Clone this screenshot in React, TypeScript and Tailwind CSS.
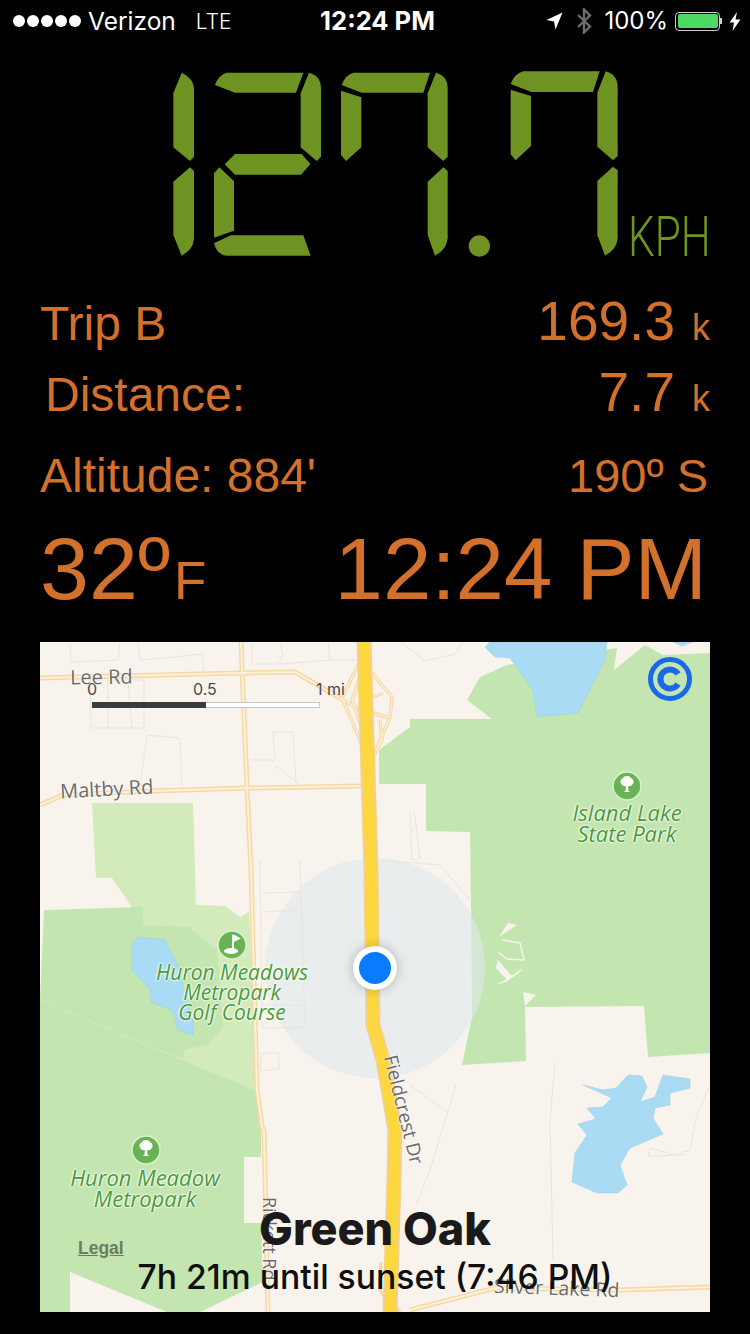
export default function App() {
  const lcd = "#6e9322";
  const road = "#f6d8a6";
  const roadIn = "#fdf1d8";
  const thin = "#e9e5dd";
  return (
    <div className="w-[750px] h-[1334px] bg-black overflow-hidden font-['Liberation_Sans',sans-serif] text-[#d2702c]">
      {/* status bar */}
      <div className="h-10 grid grid-cols-[1fr_auto_1fr] items-center text-white font-['Inter',sans-serif] text-[24.5px] leading-none pt-[2px]">
        <div className="flex items-center pl-[13px]">
          <div className="flex gap-[2px]">
            <span className="w-3 h-3 rounded-full bg-white" />
            <span className="w-3 h-3 rounded-full bg-white" />
            <span className="w-3 h-3 rounded-full bg-white" />
            <span className="w-3 h-3 rounded-full bg-white" />
            <span className="w-3 h-3 rounded-full bg-white" />
          </div>
          <span className="ml-[7px] font-normal">Verizon</span>
          <span className="ml-[20px] font-light text-[21px]">LTE</span>
        </div>
        <div className="font-bold text-[25.5px] pl-[5px]">12:24 PM</div>
        <div className="flex items-center justify-end pr-[9px]">
          <svg width="17" height="18" viewBox="0 0 17 18" className="mr-[13px]"><path d="M16.5 0.5 L0.5 8 L8 9.5 L9.5 17.5 Z" fill="#fff" /></svg>
          <svg width="16" height="26" viewBox="0 0 16 26" className="mr-[12px]"><path d="M2 7 L14 18.5 L8 24.5 L8 1.5 L14 7.5 L2 19" fill="none" stroke="#6d6d6d" strokeWidth="2.4" /></svg>
          <span className="font-normal text-[24px]">100%</span>
          <div className="ml-[7px] flex items-center">
            <div className="w-[45px] h-[19px] rounded-[4px] border border-[#cfcfcf] p-[1.5px]"><div className="w-full h-full rounded-[2px] bg-[#4cd964]" /></div>
            <span className="w-[2px] h-[6px] bg-[#cfcfcf]" />
          </div>
          <svg width="12" height="19" viewBox="0 0 12 19" className="ml-[7px]"><path d="M8 0 L0.5 10.5 L5 10.5 L3.5 19 L11.5 7.5 L6.5 7.5 Z" fill="#fff" /></svg>
        </div>
      </div>

      {/* speedometer */}
      <div className="mt-5 h-[210px] flex items-end pl-[160px]">
        <svg width="462" height="210" viewBox="0 0 1386 630" className="shrink-0">
          <g fill={lcd}>
            <path d="M65 38 Q100 55 102 85 L102 290 L90 303 L40 262 L40 100 Z" />
            <path d="M90 322 L102 333 L102 535 Q100 570 65 587 L40 525 L40 365 Z" />
            <path d="M200 38 L430 38 L408 98 L225 98 L165 75 Q175 45 200 38 Z" />
            <path d="M447 38 Q483 48 483 85 L483 290 L470 303 L422 262 L422 100 Z" />
            <path d="M225 282 L425 282 L451 312 L423 344 L225 344 L194 313 Z" />
            <path d="M178 322 L222 364 L222 512 L162 533 L162 340 Z" />
            <path d="M212 526 L430 526 L452 587 L200 587 Q170 585 162 550 Z" />
            <path d="M580 38 L810 38 L790 98 L605 98 L545 75 Q555 45 580 38 Z" />
            <path d="M543 92 L604 112 L604 262 L558 303 L543 285 Z" />
            <path d="M828 38 Q863 48 863 85 L863 290 L850 303 L803 262 L803 100 Z" />
            <path d="M850 322 L863 333 L863 535 Q860 570 825 587 L803 525 L803 365 Z" />
            <circle cx="958" cy="558" r="32" />
            <path d="M1089 34 L1319 34 L1299 96 L1114 96 L1052 72 Q1064 41 1089 34 Z" />
            <path d="M1052 89 L1113 108 L1113 258 L1067 301 L1052 283 Z" />
            <path d="M1337 34 Q1373 44 1373 82 L1373 288 L1359 301 L1312 260 L1312 98 Z" />
            <path d="M1359 320 L1373 331 L1373 535 Q1370 570 1335 587 L1312 525 L1312 363 Z" />
          </g>
        </svg>
        <span className="ml-[6px] mb-[11px] w-[78px] font-['Roboto',sans-serif] font-light text-[55px] leading-[44px] text-[#6e9322] whitespace-nowrap origin-left scale-x-[0.77]">KPH</span>
      </div>

      {/* readouts */}
      <div className="mt-6 h-[54px] flex items-baseline justify-between px-10 leading-none">
        <span className="text-[48px]">Trip B</span>
        <span className="text-[55px]">169.3<span className="ml-[17px] text-[36px]">k</span></span>
      </div>
      <div className="mt-[17px] h-[54px] flex items-baseline justify-between pl-[45px] pr-10 leading-none">
        <span className="text-[48px]">Distance:</span>
        <span className="text-[55px]">7.7<span className="ml-[17px] text-[36px]">k</span></span>
      </div>
      <div className="mt-[33px] h-[46px] flex items-baseline justify-between pl-10 pr-[42px] leading-none">
        <span className="text-[48px]">Altitude: 884'</span>
        <span className="text-[47px]">190º S</span>
      </div>
      <div className="mt-[27px] h-[86px] flex items-baseline justify-between pl-10 pr-[43px] leading-none">
        <span className="text-[88px]">32º<span className="ml-[4px] text-[53px]">F</span></span>
        <span className="text-[87px]">12:24 PM</span>
      </div>

      {/* map */}
      <div className="mt-[31px] mx-10 relative w-[670px] h-[670px] bg-[#f8f4ed] overflow-hidden">
        <svg width="670" height="670" viewBox="40 642 670 670" className="block">
          {/* light park */}
          <polygon fill="#d3ebbb" points="92,803 193,803 196,905 225,906 240,917 249,912 258,1095 180,1100 131,1000 131,906 112,878 96,878" />
          {/* dark parks */}
          <polygon fill="#c3e5af" points="44,910 143,907 143,925 188,927 217,950 223,1028 207,1045 185,1050 183,1060 255,1090 258,1085 261,1127 261,1157 244,1157 244,1223 261,1223 263,1282 200,1312 167,1312 70,1272 70,1312 40,1312 40,1000" />
          <polygon fill="#c3e5af" points="467,700 480,677 507,665 617,648 614,670 645,645 663,655 710,653 710,1053 648,1057 644,1006 525,1007 526,1061 462,1065 472,1017 471,903 470,832 426,831 426,784 379,784 379,750 410,727 410,719 492,719" />
          <polyline fill="none" stroke="#d0eabd" strokeWidth="1" points="40,1000 183,1060 255,1090" />
          {/* park notches */}
          <g fill="#f8f4ed">
            <polygon points="499,937 508,923 517,925" />
            <polygon points="523,992 536,995 525,1006" />
            <polygon points="495,985 505,980 523,968 520,972 506,982" />
            <polygon points="498,960 496,968 508,981 512,976" />
          </g>
          <polyline fill="none" stroke="#f8f4ed" strokeWidth="1.5" points="502,940 520,943 524,960 507,959 498,952" />
          {/* water */}
          <g fill="#a9dcf4" stroke="#9fd0e4" strokeWidth="0.6">
            <polygon points="485,647 490,642 607,642 605,660 578,713 537,717 533,690 510,658 495,657" />
            <polygon points="673,642 692,642 682,646" />
            <polygon points="132,943 139,937 165,940 177,963 193,1020 193,1035 178,1030 172,1010 151,1002 150,990 132,970" />
            <polygon points="572,1182 575,1153 587,1135 578,1124 596,1119 587,1108 603,1107 612,1098 583,1085 603,1090 616,1088 628,1075 642,1076 647,1087 640,1102 655,1097 663,1075 690,1079 690,1088 670,1093 670,1105 655,1108 653,1118 663,1134 630,1148 620,1165 627,1185 618,1193 597,1193" />
          </g>
          {/* accuracy circle */}
          <circle cx="375" cy="968" r="110" fill="#dfe7ef" fillOpacity="0.6" />
          {/* thin parcels */}
          <g fill="none" stroke={thin} strokeWidth="1">
            <polyline points="70,643 71,662 118,660 120,643" />
            <polyline points="138,643 140,660 175,657 202,654 204,672" />
            <polyline points="252,643 252,664 278,664 283,655 280,643" />
            <polyline points="280,664 330,660 328,643" />
            <polyline points="330,660 358,660 360,645" />
            <polyline points="144,680 90,680 91,728 144,728 144,678" />
            <line x1="108" y1="680" x2="108" y2="728" />
            <line x1="128" y1="680" x2="132" y2="728" />
            <polyline points="140,787 147,735 180,738 182,787" />
            <polyline points="250,760 275,760 273,732 293,732 296,782" />
            <polyline points="275,765 300,785" />
            <polyline points="402,643 425,661 455,654 463,642" />
            <polyline points="260,860 262,1028 305,1027 300,860" />
            <line x1="262" y1="893" x2="300" y2="892" />
            <line x1="262" y1="912" x2="300" y2="910" />
            <line x1="262" y1="952" x2="302" y2="952" />
            <line x1="262" y1="1005" x2="304" y2="1005" />
            <polygon points="261,1053 279,1053 279,1069 261,1071" />
            <polyline points="410,812 412,860 420,858 414,810" />
            <polyline points="378,860 440,865 470,900" />
            <polyline points="410,1085 448,1113" />
            <polyline points="456,1085 430,1170 416,1205" />
            <polyline points="555,1062 550,1120 553,1260" />
            <polyline points="710,1085 696,1118 690,1150 675,1155 650,1148 648,1156 686,1155" />
          </g>
          {/* roads */}
          <g fill="none" stroke={road} strokeWidth="5">
            <polyline points="241,642 247,787 251,870 257,1090 262,1127 264,1130 268,1312" />
            <polyline points="40,678 240,673 295,672 340,698" />
            <polyline points="40,805 63,795 153,791 247,788 364,786" />
            <polyline points="410,1310 495,1288 620,1290 710,1287" />
          </g>
          <g fill="none" stroke={roadIn} strokeWidth="2">
            <polyline points="241,642 247,787 251,870 257,1090 262,1127 264,1130 268,1312" />
            <polyline points="40,678 240,673 295,672 340,698" />
            <polyline points="40,805 63,795 153,791 247,788 364,786" />
            <polyline points="410,1310 495,1288 620,1290 710,1287" />
          </g>
          <g fill="none" stroke={road} strokeWidth="3.5">
            <polyline points="358,665 342,698 363,747" />
            <polyline points="360,677 352,700 368,745" />
            <polyline points="338,698 363,710 390,718" />
            <polyline points="372,673 392,697 390,717 375,753" />
            <polyline points="373,697 383,693" />
            <polyline points="380,720 382,740 373,757" />
            <polyline points="381,1262 380,1290 395,1312" />
            <polyline points="386,1280 388,1300 400,1312" />
          </g>
          <g fill="none" stroke={roadIn} strokeWidth="1.2">
            <polyline points="358,665 342,698 363,747" />
            <polyline points="360,677 352,700 368,745" />
            <polyline points="338,698 363,710 390,718" />
            <polyline points="372,673 392,697 390,717 375,753" />
            <polyline points="373,697 383,693" />
            <polyline points="380,720 382,740 373,757" />
          </g>
          <polyline fill="none" stroke="#f5cf90" strokeWidth="15" points="364,642 371,870 373,1025 383,1060 395,1130 394,1180 390,1312" />
          <polyline fill="none" stroke="#fdd73e" strokeWidth="11" points="364,642 371,870 373,1025 383,1060 395,1130 394,1180 390,1312" />
          {/* tree icons */}
          <circle cx="627" cy="786" r="14" fill="#69b354" stroke="#d9f0cc" strokeWidth="1.5" />
          <path d="M627 776 a4 4 0 0 1 4 2 a4 4 0 0 1 1 7 a3.5 3.5 0 0 1 -4 1 l0.5 5 l2 1 h-7 l2 -1 l0.5 -5 a3.5 3.5 0 0 1 -4 -1 a4 4 0 0 1 1 -7 a4 4 0 0 1 4 -2 z" fill="#fff" />
          <circle cx="146" cy="1150" r="14" fill="#69b354" stroke="#d9f0cc" strokeWidth="1.5" />
          <path d="M146 1140 a4 4 0 0 1 4 2 a4 4 0 0 1 1 7 a3.5 3.5 0 0 1 -4 1 l0.5 5 l2 1 h-7 l2 -1 l0.5 -5 a3.5 3.5 0 0 1 -4 -1 a4 4 0 0 1 1 -7 a4 4 0 0 1 4 -2 z" fill="#fff" />
          {/* golf icon */}
          <circle cx="232" cy="945" r="14" fill="#69b354" stroke="#d9f0cc" strokeWidth="1.5" />
          <path d="M233 935 v15 M233 935 l6 3.5 l-6 3" fill="#fff" stroke="#fff" strokeWidth="1.8" />
          <ellipse cx="231" cy="951" rx="7" ry="3" fill="#fff" />
          {/* credit badge */}
          <circle cx="670" cy="679" r="19.5" fill="none" stroke="#1b68e8" strokeWidth="5" />
          <path d="M678 674 A9.5 9.5 0 1 0 678 684" fill="none" stroke="#1b68e8" strokeWidth="6" />
        </svg>

        {/* scale */}
        <span className="absolute left-[47px] top-[39px] text-[16px] leading-none text-[#4a4a4a] font-['Inter',sans-serif]">0</span>
        <span className="absolute left-[153px] top-[39px] text-[16px] leading-none text-[#4a4a4a] font-['Inter',sans-serif]">0.5</span>
        <span className="absolute left-[276px] top-[39px] text-[16px] leading-none text-[#4a4a4a] font-['Inter',sans-serif]">1 mi</span>
        <div className="absolute left-[52px] top-[60px] w-[228px] h-[6px] flex bg-white border border-[#c9c9c9]">
          <div className="w-[114px] -m-px h-[6px] bg-[#3b3b3b]" />
        </div>

        {/* road labels */}
        <span className="absolute left-[30px] top-[25px] text-[20px] leading-none text-[#6b6b6f] font-['Open_Sans',sans-serif] -rotate-1 [text-shadow:0_0_2px_#fff,0_0_2px_#fff]">Lee Rd</span>
        <span className="absolute left-[20px] top-[137px] text-[20px] leading-none text-[#6b6b6f] font-['Open_Sans',sans-serif] -rotate-3 [text-shadow:0_0_2px_#fff,0_0_2px_#fff]">Maltby Rd</span>
        <span className="absolute left-[350px] top-[404px] text-[19px] leading-none text-[#6b6b6f] font-['Open_Sans',sans-serif] rotate-[76deg] origin-left [text-shadow:0_0_2px_#fff,0_0_2px_#fff] whitespace-nowrap">Fieldcrest Dr</span>
        <span className="absolute left-[230px] top-[546px] text-[18px] leading-none text-[#6b6b6f] font-['Open_Sans',sans-serif] rotate-90 origin-left [text-shadow:0_0_2px_#fff,0_0_2px_#fff] whitespace-nowrap">Rickett Rd</span>
        <span className="absolute left-[454px] top-[636px] text-[19.5px] leading-none text-[#6b6b6f] font-['Open_Sans',sans-serif] rotate-[2deg] [text-shadow:0_0_2px_#fff,0_0_2px_#fff] whitespace-nowrap">Silver Lake Rd</span>

        {/* park labels */}
        <div className="absolute left-[507px] top-[160px] w-[160px] text-center text-[22px] leading-[21px] italic text-[#4a9a38] font-['Open_Sans',sans-serif] [text-shadow:0_0_2px_#fff,0_0_2px_#fff,0_0_3px_#fff]">Island Lake<br />State Park</div>
        <div className="absolute left-[92px] top-[320px] w-[200px] text-center text-[21px] leading-[20px] italic text-[#4a9a38] font-['Open_Sans',sans-serif] [text-shadow:0_0_2px_#fff,0_0_2px_#fff,0_0_3px_#fff]">Huron Meadows<br />Metropark<br />Golf Course</div>
        <div className="absolute left-[5px] top-[525px] w-[200px] text-center text-[22px] leading-[21px] italic text-[#4a9a38] font-['Open_Sans',sans-serif] [text-shadow:0_0_2px_#fff,0_0_2px_#fff,0_0_3px_#fff]">Huron Meadow<br />Metropark</div>

        <span className="absolute left-[38px] top-[598px] text-[17.5px] leading-none font-bold underline text-[#6c7b67]">Legal</span>

        {/* location dot */}
        <div className="absolute left-[313px] top-[304px] w-11 h-11 rounded-full bg-white flex items-center justify-center shadow-[0_0_12px_rgba(0,0,0,0.25)]">
          <div className="w-8 h-8 rounded-full bg-[#0a7aff]" />
        </div>

        {/* sunset caption */}
        <div className="absolute inset-x-0 bottom-[13px] flex flex-col items-center font-['Inter',sans-serif] text-[#0f0f0f]">
          <span className="text-[45px] leading-[48px] font-extrabold text-[#1a1a1a] -translate-y-[6px]">Green Oak</span>
          <span className="text-[33.7px] leading-[40px] font-medium -translate-y-[2px]">7h 21m until sunset (7:46 PM)</span>
        </div>
      </div>
    </div>
  );
}
